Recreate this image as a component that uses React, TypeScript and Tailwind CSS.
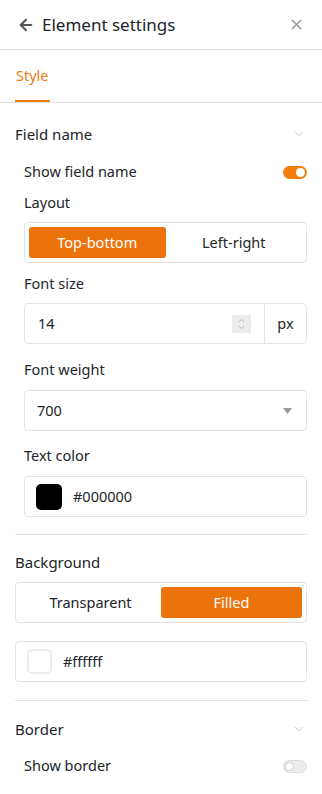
import { ArrowLeft, X, ChevronDown, ChevronUp } from 'lucide-react';

function Toggle({ on }: { on: boolean }) {
  if (on) {
    return (
      <div className="relative h-[13px] w-[24px] rounded-full bg-[#f47d0a]">
        <div className="absolute right-[2px] top-[2px] h-[9px] w-[9px] rounded-full bg-white" />
      </div>
    );
  }
  return (
    <div className="relative h-[13px] w-[24px] rounded-full border border-[#dcdcdc] bg-[#ececec]">
      <div className="absolute left-[1px] top-[1px] h-[9px] w-[9px] rounded-full border border-[#cfcfcf] bg-white" />
    </div>
  );
}

function SectionHeader({ title }: { title: string }) {
  return (
    <div className="flex h-[20px] items-center justify-between">
      <span className="text-[15px] text-[#212529]">{title}</span>
      <ChevronDown size={14} strokeWidth={1.3} className="mr-[1px] text-[#b5b5b5]" />
    </div>
  );
}

function Segmented({ options, active }: { options: string[]; active: number }) {
  return (
    <div className="flex h-[41px] rounded-[4px] border border-[#e3e3e8] p-[4px]">
      {options.map((o, i) => (
        <div
          key={o}
          className={
            i === active
              ? 'flex flex-1 items-center justify-center rounded-[3px] bg-[#ec730b] text-[14.5px] text-white'
              : 'flex flex-1 items-center justify-center text-[14.5px] text-[#212529]'
          }
        >
          {o}
        </div>
      ))}
    </div>
  );
}

function ColorInput({ value, white }: { value: string; white?: boolean }) {
  return (
    <div className="flex h-[41px] items-center rounded-[4px] border border-[#e3e3e8] pl-[11px]">
      {white ? (
        <div className="h-[25px] w-[25px] rounded-[5px] border-2 border-[#ececec] bg-white" />
      ) : (
        <div className="h-[26px] w-[26px] rounded-[5px] bg-black" />
      )}
      <span className="ml-[11px] text-[14.5px] text-[#212529]">{value}</span>
    </div>
  );
}

export default function App() {
  return (
    <div className="h-[794px] w-[322px] overflow-hidden bg-white font-['Noto_Sans',sans-serif] text-[#212529]">
      <div className="flex h-[50px] items-center border-b border-[#e3e3e3] pl-[17px] pr-[17px]">
        <ArrowLeft size={18} strokeWidth={2.8} className="text-[#555]" />
        <span className="ml-[7px] text-[17px] text-[#212529]">Element settings</span>
        <X size={17} strokeWidth={2.2} className="ml-auto text-[#9a9a9a]" />
      </div>

      <div className="flex h-[53px] border-b border-[#e3e3e3] px-[15px]">
        <div className="flex flex-col justify-center border-b-2 border-[#f47d0a] px-[1px] pt-[2px] text-[14.5px] text-[#f07a10]">
          Style
        </div>
      </div>

      <div className="px-[15px]">
        <div className="pt-[21px]">
          <SectionHeader title="Field name" />
        </div>
        <div className="pl-[9px]">
          <div className="mt-[14px] flex h-[28px] items-center justify-between">
            <span className="text-[14.5px]">Show field name</span>
            <Toggle on />
          </div>
          <div className="mt-[7px] flex h-[20px] items-center text-[14.5px]">Layout</div>
          <div className="mt-[9px]">
            <Segmented options={['Top-bottom', 'Left-right']} active={0} />
          </div>
          <div className="mt-[11px] flex h-[20px] items-center text-[14.5px]">Font size</div>
          <div className="mt-[9px] flex h-[41px] rounded-[4px] border border-[#e3e3e8]">
            <div className="flex flex-1 items-center pl-[13px] pr-[13px]">
              <span className="text-[14.5px]">14</span>
              <div className="ml-auto flex h-[18px] w-[19px] flex-col items-center justify-center bg-[#ececec]">
                <ChevronUp size={9} strokeWidth={1.6} className="-mb-[1px] text-[#9a9a9a]" />
                <ChevronDown size={9} strokeWidth={1.6} className="-mt-[1px] text-[#9a9a9a]" />
              </div>
            </div>
            <div className="flex w-[42px] items-center justify-center border-l border-[#e3e3e8] text-[14.5px]">
              px
            </div>
          </div>
          <div className="mt-[16px] flex h-[20px] items-center text-[14.5px]">Font weight</div>
          <div className="mt-[10px] flex h-[41px] items-center rounded-[4px] border border-[#e3e3e8] pl-[12px] pr-[14px]">
            <span className="text-[14.5px]">700</span>
            <svg width="9" height="6" viewBox="0 0 9 6" className="ml-auto">
              <path d="M0 0 L9 0 L4.5 6 Z" fill="#9b9b9b" />
            </svg>
          </div>
          <div className="mt-[15px] flex h-[20px] items-center text-[14.5px]">Text color</div>
          <div className="mt-[10px]">
            <ColorInput value="#000000" />
          </div>
        </div>

        <div className="mt-[17px] h-px bg-[#e3e3e3]" />

        <div className="mt-[17px] flex h-[20px] items-center text-[15px]">Background</div>
        <div className="mt-[10px]">
          <Segmented options={['Transparent', 'Filled']} active={1} />
        </div>
        <div className="mt-[18px]">
          <ColorInput value="#ffffff" white />
        </div>

        <div className="mt-[18px] h-px bg-[#e3e3e3]" />

        <div className="mt-[18px]">
          <SectionHeader title="Border" />
        </div>
        <div className="pl-[9px]">
          <div className="mt-[13px] flex h-[28px] items-center justify-between">
            <span className="text-[14.5px]">Show border</span>
            <Toggle on={false} />
          </div>
        </div>
      </div>
    </div>
  );
}
